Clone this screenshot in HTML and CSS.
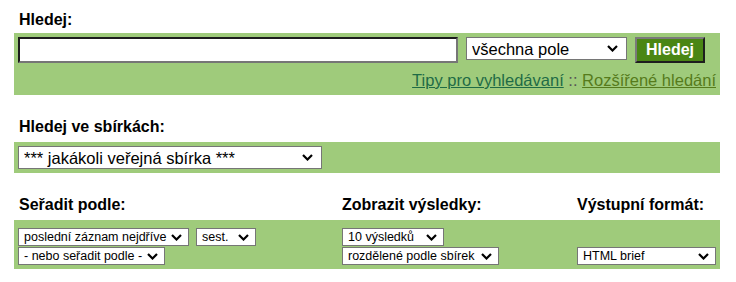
FILE: index.html
```html
<!DOCTYPE html>
<html lang="cs">
<head>
    <meta charset="UTF-8">
    <title>Hledej</title>
    <link rel="stylesheet" href="styles.css">
</head>
<body>
    <form class="search-form">
        <div class="label label-first">Hledej:</div>
        <div class="band band-search">
            <div class="search-row">
                <input type="text" class="search-input">
                <select class="select-big select-field">
                    <option>všechna pole</option>
                </select>
                <button type="button" class="search-button">Hledej</button>
            </div>
            <div class="search-links">
                <a href="#" class="link-tips">Tipy pro vyhledávaní</a>
                <span class="sep">::</span>
                <a href="#" class="link-advanced">Rozšířené hledání</a>
            </div>
        </div>

        <div class="label label-gap">Hledej ve sbírkách:</div>
        <div class="band band-collection">
            <select class="select-big select-collection">
                <option>*** jakákoli veřejná sbírka ***</option>
            </select>
        </div>

        <div class="options-labels label-gap">
            <div class="label">Seřadit podle:</div>
            <div class="label">Zobrazit výsledky:</div>
            <div class="label">Výstupní formát:</div>
        </div>
        <div class="band band-options">
            <div class="opt-col">
                <div class="opt-row">
                    <select class="select-small sort-order">
                        <option>poslední záznam nejdříve</option>
                    </select>
                    <select class="select-small sort-dir">
                        <option>sest.</option>
                    </select>
                </div>
                <div class="opt-row">
                    <select class="select-small sort-field">
                        <option>- nebo seřadit podle -</option>
                    </select>
                </div>
            </div>
            <div class="opt-col">
                <div class="opt-row">
                    <select class="select-small results-count">
                        <option>10 výsledků</option>
                    </select>
                </div>
                <div class="opt-row">
                    <select class="select-small results-split">
                        <option>rozdělené podle sbírek</option>
                    </select>
                </div>
            </div>
            <div class="opt-col opt-col-bottom">
                <div class="opt-row">
                    <select class="select-small output-format">
                        <option>HTML brief</option>
                    </select>
                </div>
            </div>
        </div>
    </form>
</body>
</html>
```

FILE: styles.css
```css
body {
    margin: 0;
    font-family: "Liberation Sans", Arial, sans-serif;
    font-size: 16px;
    color: #000;
    background: #fff;
}
.search-form {
    width: 706px;
    margin-left: 14px;
}
.label {
    font-weight: bold;
    font-size: 16px;
    line-height: 18px;
    padding-left: 5px;
}
.label-first {
    padding-top: 11px;
    margin-bottom: 4px;
}
.label-gap {
    margin-top: 23px;
    margin-bottom: 6px;
}
.band {
    background-color: #9fcb7b;
    padding: 4px;
}
.search-row {
    display: flex;
    align-items: flex-start;
}
.search-input {
    width: 440px;
    height: 26px;
    box-sizing: border-box;
    margin: 0;
    padding: 1px 4px;
    border: 2px solid;
    border-color: #1c1c1c #767676 #767676 #1c1c1c;
    border-radius: 0;
    font-family: inherit;
    font-size: 16px;
    background: #fff;
}
select {
    -webkit-appearance: none;
    appearance: none;
    box-sizing: border-box;
    margin: 0;
    font-family: "Liberation Sans", Arial, sans-serif;
    color: #000;
    border: 1px solid #767676;
    border-radius: 0;
    background: #fff url("data:image/svg+xml,%3Csvg xmlns='http://www.w3.org/2000/svg' width='11' height='7'%3E%3Cpath d='M1 1l4.5 4.5L10 1' fill='none' stroke='%23000' stroke-width='2.2'/%3E%3C/svg%3E") no-repeat right 6px center;
}
.select-big {
    font-size: 16.5px;
    height: 23px;
    padding: 0 24px 0 5px;
    background-position: right 8px center;
}
.select-field {
    width: 161px;
    margin-left: 8px;
}
.search-button {
    width: 70px;
    height: 26px;
    margin-left: 8px;
    padding: 0;
    border: 2px solid;
    border-color: #7a7a7a #1e1e1e #1e1e1e #7a7a7a;
    background-color: #4a8614;
    color: #fff;
    font-family: inherit;
    font-weight: bold;
    font-size: 16px;
}
.search-links {
    text-align: right;
    font-size: 16.5px;
    line-height: 18px;
    margin-top: 8px;
    padding-bottom: 2px;
}
.link-tips {
    color: #1f6b46;
}
.link-advanced {
    color: #567b1c;
}
.sep {
    color: #555;
}
.select-collection {
    width: 304px;
}
.band-options {
    display: grid;
    grid-template-columns: 324px 235px 1fr;
    padding: 8px 4px 4px;
}
.options-labels {
    display: grid;
    grid-template-columns: 324px 235px 1fr;
}
.opt-col {
    display: flex;
    flex-direction: column;
    gap: 1px;
}
.opt-col-bottom {
    justify-content: flex-end;
}
.opt-row {
    display: flex;
    gap: 7px;
}
.select-small {
    font-size: 12.5px;
    height: 18px;
    padding: 0 20px 0 5px;
}
.sort-order { width: 171px; }
.sort-dir { width: 60px; }
.sort-field { width: 147px; }
.results-count { width: 102px; }
.results-split { width: 157px; }
.output-format { width: 139px; }
.options-labels .label:nth-child(2) { padding-left: 4px; }
.options-labels .label:nth-child(3) { padding-left: 4px; }
```
